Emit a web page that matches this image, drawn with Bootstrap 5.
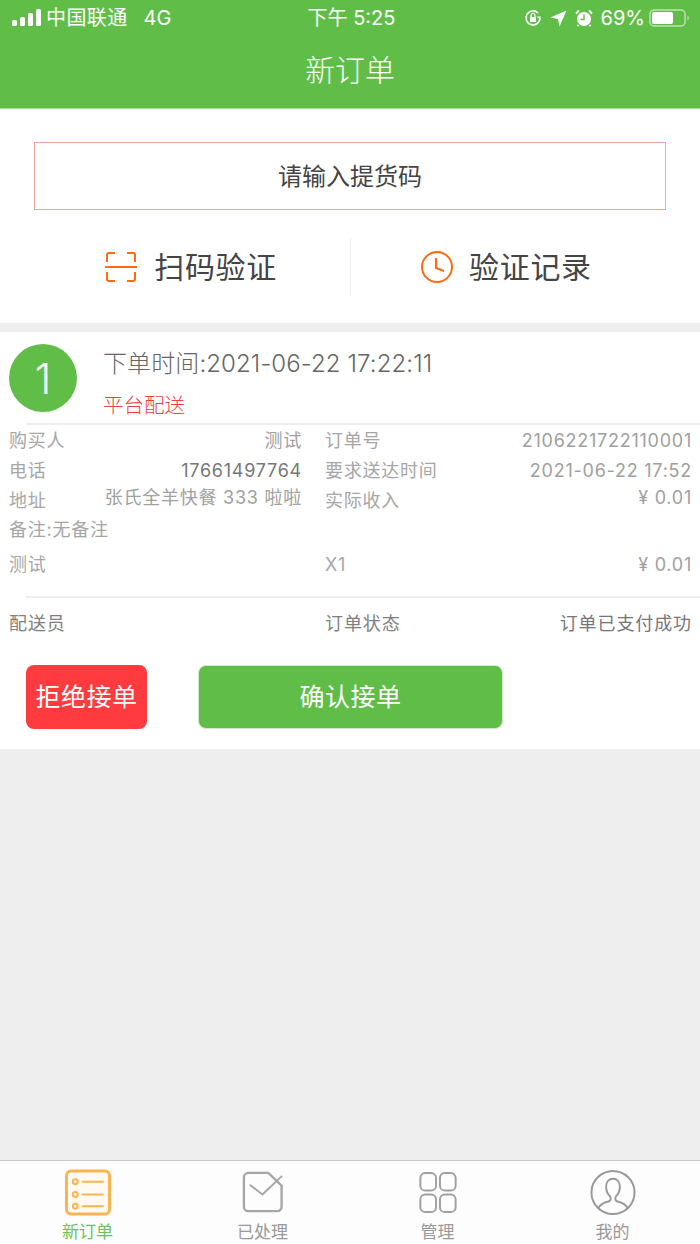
<!DOCTYPE html>
<html lang="zh-CN">
<head>
    <meta charset="UTF-8">
    <meta name="viewport" content="width=device-width, initial-scale=1.0">
    <title>新订单</title>
    <link href="https://cdn.jsdelivr.net/npm/bootstrap@5.3.1/dist/css/bootstrap.min.css" rel="stylesheet">
    <style>
        html, body {
            height: 100%;
        }

        body {
            background-color: #eeeeee;
            font-family: "Inter", "Noto Sans CJK SC", sans-serif;
            font-weight: 300;
            color: #666;
        }

        .app-page {
            height: 1244px;
            overflow: hidden;
        }

        .top-head {
            background-color: #60be48;
            color: #fff;
            height: 109px;
            border-bottom: 1px solid #a9d89c;
        }

        .status-bar {
            height: 36px;
            padding: 0 9px 0 12px;
            font-size: 20px;
            font-weight: 400;
            line-height: 36px;
        }

        .status-side {
            width: 260px;
        }

        .carrier-name {
            letter-spacing: .4px;
        }

        .head-title {
            font-size: 30px;
            line-height: 36px;
            margin-top: 16px;
        }

        .search-block {
            background-color: #fff;
            height: 214px;
            padding: 33px 34px 0;
            margin-bottom: 9px;
        }

        .code-box {
            height: 68px;
            border: 1px solid #f2a59b;
            font-size: 24px;
            line-height: 68px;
            color: #444;
            font-weight: 400;
        }

        .verify-row {
            margin: 28px -34px 0;
            height: 58px;
        }

        .verify-item {
            font-size: 30px;
            color: #444;
            font-weight: 400;
            letter-spacing: .7px;
            gap: 17px;
        }

        .verify-scan {
            padding-right: 73px;
        }

        .verify-log {
            padding-left: 69px;
            gap: 15px;
            border-left: 1px solid #eee;
        }

        .order-block {
            background-color: #fff;
            height: 417px;
        }

        .order-head {
            height: 91px;
            padding: 12px 0 0 9px;
        }

        .order-num {
            width: 68px;
            height: 68px;
            border-radius: 50%;
            background-color: #60be48;
            color: #fff;
            font-size: 42px;
            flex-shrink: 0;
            margin-right: 26px;
        }

        .order-time {
            font-size: 24px;
            line-height: 34px;
            margin-top: 3px;
            color: #666;
            letter-spacing: .1px;
        }

        .order-type {
            font-size: 20.5px;
            line-height: 30px;
            margin-top: 10px;
            color: #e8423f;
        }

        .rule-line {
            height: 2px;
            margin-left: 26px;
            background-color: #eee;
        }

        .info-list {
            padding-top: 1px;
        }

        .info-row {
            font-size: 18px;
            line-height: 30px;
            padding: 0 8px 0 9px;
            color: #a0a0a0;
            font-weight: 400;
            letter-spacing: .75px;
        }

        .info-left {
            width: 293px;
            margin-right: 23px;
        }

        .info-row .phone {
            color: #777;
        }

        .info-label {
            color: #a6a6a6;
        }

        .addr-row {
            line-height: 29px;
        }

        .addr-value {
            margin-top: -3px;
        }

        .goods-row {
            margin-top: 5px;
            margin-bottom: 16px;
        }

        .staff-row {
            margin-top: 11px;
            color: #777;
            letter-spacing: .9px;
        }

        .staff-row .info-label {
            color: #808080;
        }

        .btn-row {
            padding: 26px 0 0 26px;
        }

        .act-btn {
            height: 64px;
            font-size: 25px;
            line-height: 1;
            color: #fff;
            border-radius: 8px;
            font-weight: 400;
            letter-spacing: .5px;
        }

        .act-refuse {
            width: 121px;
            padding: 0;
            background-color: #ff3b3f;
            border: 0;
            margin-right: 51px;
        }

        .act-ok {
            width: 305px;
            padding: 0;
            background-color: #60be48;
            border: 1px solid #cfe8c8;
        }

        .tab-bar {
            position: fixed;
            left: 0;
            right: 0;
            bottom: 0;
            height: 84px;
            background-color: #fdfdfd;
            border-top: 1px solid #c9c9c9;
        }

        .tab-item {
            width: 25%;
            font-size: 17px;
            font-weight: 400;
            color: #999;
            height: 83px;
        }

        .tab-item svg {
            display: block;
            margin-top: 8px;
            height: 48px;
        }

        .tab-item span {
            line-height: 24px;
            margin-top: 4px;
        }

        .tab-on {
            color: #6cc255;
        }
    </style>
</head>
<body>

    <div class="app-page">
        <!-- green header with phone status bar -->
        <div class="top-head">
            <div class="status-bar d-flex justify-content-between align-items-center">
                <div class="status-side d-flex align-items-center">
                    <svg width="30" height="18" viewBox="0 0 30 18" fill="#fff">
                        <rect x="0" y="11" width="5" height="6" rx="1.5"/>
                        <rect x="8" y="8" width="5" height="9" rx="1.5"/>
                        <rect x="16" y="4" width="5" height="13" rx="1.5"/>
                        <rect x="24" y="0" width="5" height="17" rx="1.5"/>
                    </svg>
                    <span class="carrier-name ms-1">中国联通</span>
                    <span class="ms-3">4G</span>
                </div>
                <div>下午 5:25</div>
                <div class="status-side d-flex align-items-center justify-content-end">
                    <svg width="18" height="18" viewBox="0 0 18 18" fill="none" stroke="#fff" stroke-width="1.6" class="me-2">
                        <path d="M16 9a7 7 0 1 1-2-5"/>
                        <path d="M12.5 7.5 16.5 7.5 16.5 10.5z" fill="#fff" stroke="none"/>
                        <rect x="6" y="8" width="6" height="5" rx="0.5" fill="#fff" stroke="none"/>
                        <path d="M7 8V6.5a2 2 0 0 1 4 0V8" stroke-width="1.2"/>
                    </svg>
                    <svg width="17" height="17" viewBox="0 0 17 17" fill="#fff" class="me-2">
                        <path d="M16.5 0.5 9.5 16.5 8 9 0.5 7.5z"/>
                    </svg>
                    <svg width="18" height="18" viewBox="0 0 18 18" class="me-2">
                        <circle cx="9" cy="10" r="7" fill="#fff"/>
                        <path d="M9 5.5V10.5H5.5" fill="none" stroke="#60be48" stroke-width="1.4"/>
                        <path d="M1 4.5 4 1.5M17 4.5 14 1.5M3.5 16 2.5 17M14.5 16l1 1" stroke="#fff" stroke-width="2" fill="none"/>
                    </svg>
                    <span>69%</span>
                    <svg width="42" height="18" viewBox="0 0 42 18" class="ms-1">
                        <rect x="1" y="1" width="35" height="16" rx="4" fill="none" stroke="#bfe4b4" stroke-width="1.4"/>
                        <rect x="3" y="3" width="21" height="12" rx="2" fill="#fff"/>
                        <path d="M38.500 6.500a3 3 0 0 1 0 5z" fill="#bfe4b4"/>
                    </svg>
                </div>
            </div>
            <div class="head-title text-center">新订单</div>
        </div>

        <!-- pick-up code input and the two verify actions -->
        <div class="search-block">
            <div class="code-box text-center">请输入提货码</div>
            <div class="verify-row d-flex">
                <div class="verify-item verify-scan w-50 d-flex align-items-center justify-content-end">
                    <svg width="32" height="30" viewBox="0 0 32 30" fill="none" stroke="#ff6a13" stroke-width="2">
                        <path d="M2 10V3a2 2 0 0 1 2-2h6M22 1h6a2 2 0 0 1 2 2v7M2 20v7a2 2 0 0 0 2 2h6M22 29h6a2 2 0 0 0 2-2v-7M0 15h32"/>
                    </svg>
                    <span>扫码验证</span>
                </div>
                <div class="verify-item verify-log w-50 d-flex align-items-center justify-content-start">
                    <svg width="34" height="34" viewBox="0 0 34 34" fill="none" stroke="#ff6a13" stroke-width="2">
                        <circle cx="17" cy="17" r="15"/>
                        <path d="M16 8V18L24 21"/>
                    </svg>
                    <span>验证记录</span>
                </div>
            </div>
        </div>

        <!-- order card -->
        <div class="order-block">
            <div class="order-head d-flex">
                <div class="order-num d-flex align-items-center justify-content-center">1</div>
                <div>
                    <div class="order-time">下单时间:2021-06-22 17:22:11</div>
                    <div class="order-type">平台配送</div>
                </div>
            </div>
            <div class="rule-line"></div>

            <div class="info-list">
                <div class="info-row d-flex">
                    <div class="info-left d-flex justify-content-between"><span class="info-label">购买人</span><span>测试</span></div>
                    <div class="flex-grow-1 d-flex justify-content-between"><span class="info-label">订单号</span><span>2106221722110001</span></div>
                </div>
                <div class="info-row d-flex">
                    <div class="info-left d-flex justify-content-between"><span class="info-label">电话</span><span class="phone">17661497764</span></div>
                    <div class="flex-grow-1 d-flex justify-content-between"><span class="info-label">要求送达时间</span><span>2021-06-22 17:52</span></div>
                </div>
                <div class="info-row addr-row d-flex">
                    <div class="info-left d-flex justify-content-between"><span class="info-label">地址</span><span class="addr-value">张氏全羊快餐 333 啦啦</span></div>
                    <div class="flex-grow-1 d-flex justify-content-between"><span class="info-label">实际收入</span><span class="addr-value">¥ 0.01</span></div>
                </div>
                <div class="info-row"><span class="info-label">备注:无备注</span></div>
                <div class="info-row goods-row d-flex">
                    <div class="info-left"><span class="info-label">测试</span></div>
                    <div class="flex-grow-1 d-flex justify-content-between"><span class="info-label">X1</span><span>¥ 0.01</span></div>
                </div>
            </div>
            <div class="rule-line"></div>
            <div class="info-row staff-row d-flex">
                <div class="info-left"><span class="info-label">配送员</span></div>
                <div class="flex-grow-1 d-flex justify-content-between"><span class="info-label">订单状态</span><span>订单已支付成功</span></div>
            </div>

            <div class="btn-row d-flex">
                <button type="button" class="btn act-btn act-refuse">拒绝接单</button>
                <button type="button" class="btn act-btn act-ok">确认接单</button>
            </div>
        </div>

        <!-- bottom tabs -->
        <div class="tab-bar d-flex">
            <div class="tab-item tab-on d-flex flex-column align-items-center">
                <svg width="48" height="48" viewBox="0 0 48 48" fill="none" stroke="#fbb350">
                    <rect x="2" y="2" width="44" height="44" rx="5" stroke-width="3" fill="#fffaf2"/>
                    <g stroke-width="2">
                        <circle cx="11" cy="13" r="2.500"/>
                        <circle cx="11" cy="26" r="2.500"/>
                        <circle cx="11" cy="38" r="2.500"/>
                        <path d="M18 13H40M18 26H40M18 38H40"/>
                    </g>
                </svg>
                <span>新订单</span>
            </div>
            <div class="tab-item d-flex flex-column align-items-center">
                <svg width="44" height="48" viewBox="0 0 44 48" fill="none" stroke="#a6a6a6" stroke-width="2.400">
                    <path d="M27.500 4H7a4.500 4.500 0 0 0-4.500 4.500V38.500A4.500 4.500 0 0 0 7 43H36.500A4.500 4.500 0 0 0 41 38.500V17z"/>
                    <path d="M8.500 16 21.500 26 41.500 7" stroke-width="2"/>
                </svg>
                <span>已处理</span>
            </div>
            <div class="tab-item d-flex flex-column align-items-center">
                <svg width="40" height="48" viewBox="0 0 40 48" fill="none" stroke="#a0a0a0" stroke-width="2">
                    <rect x="2" y="4" width="16" height="18" rx="5"/>
                    <rect x="22" y="4" width="16" height="18" rx="5"/>
                    <rect x="2" y="26" width="16" height="18" rx="5"/>
                    <rect x="22" y="26" width="16" height="18" rx="5"/>
                </svg>
                <span>管理</span>
            </div>
            <div class="tab-item d-flex flex-column align-items-center">
                <svg width="48" height="48" viewBox="0 0 48 48" fill="none" stroke="#999" stroke-width="2">
                    <circle cx="24" cy="24" r="22"/>
                    <path d="M9 40c2-5 7-6 11-7 2-1 2-3 1-5-3-3-4-6-4-10 0-5 3-8 7-8s7 3 7 8c0 4-1 7-4 10-1 2-1 4 1 5 4 1 9 2 11 7"/>
                </svg>
                <span>我的</span>
            </div>
        </div>
    </div>

    <script src="https://cdn.jsdelivr.net/npm/bootstrap@5.3.1/dist/js/bootstrap.bundle.min.js"></script>
</body>
</html>
